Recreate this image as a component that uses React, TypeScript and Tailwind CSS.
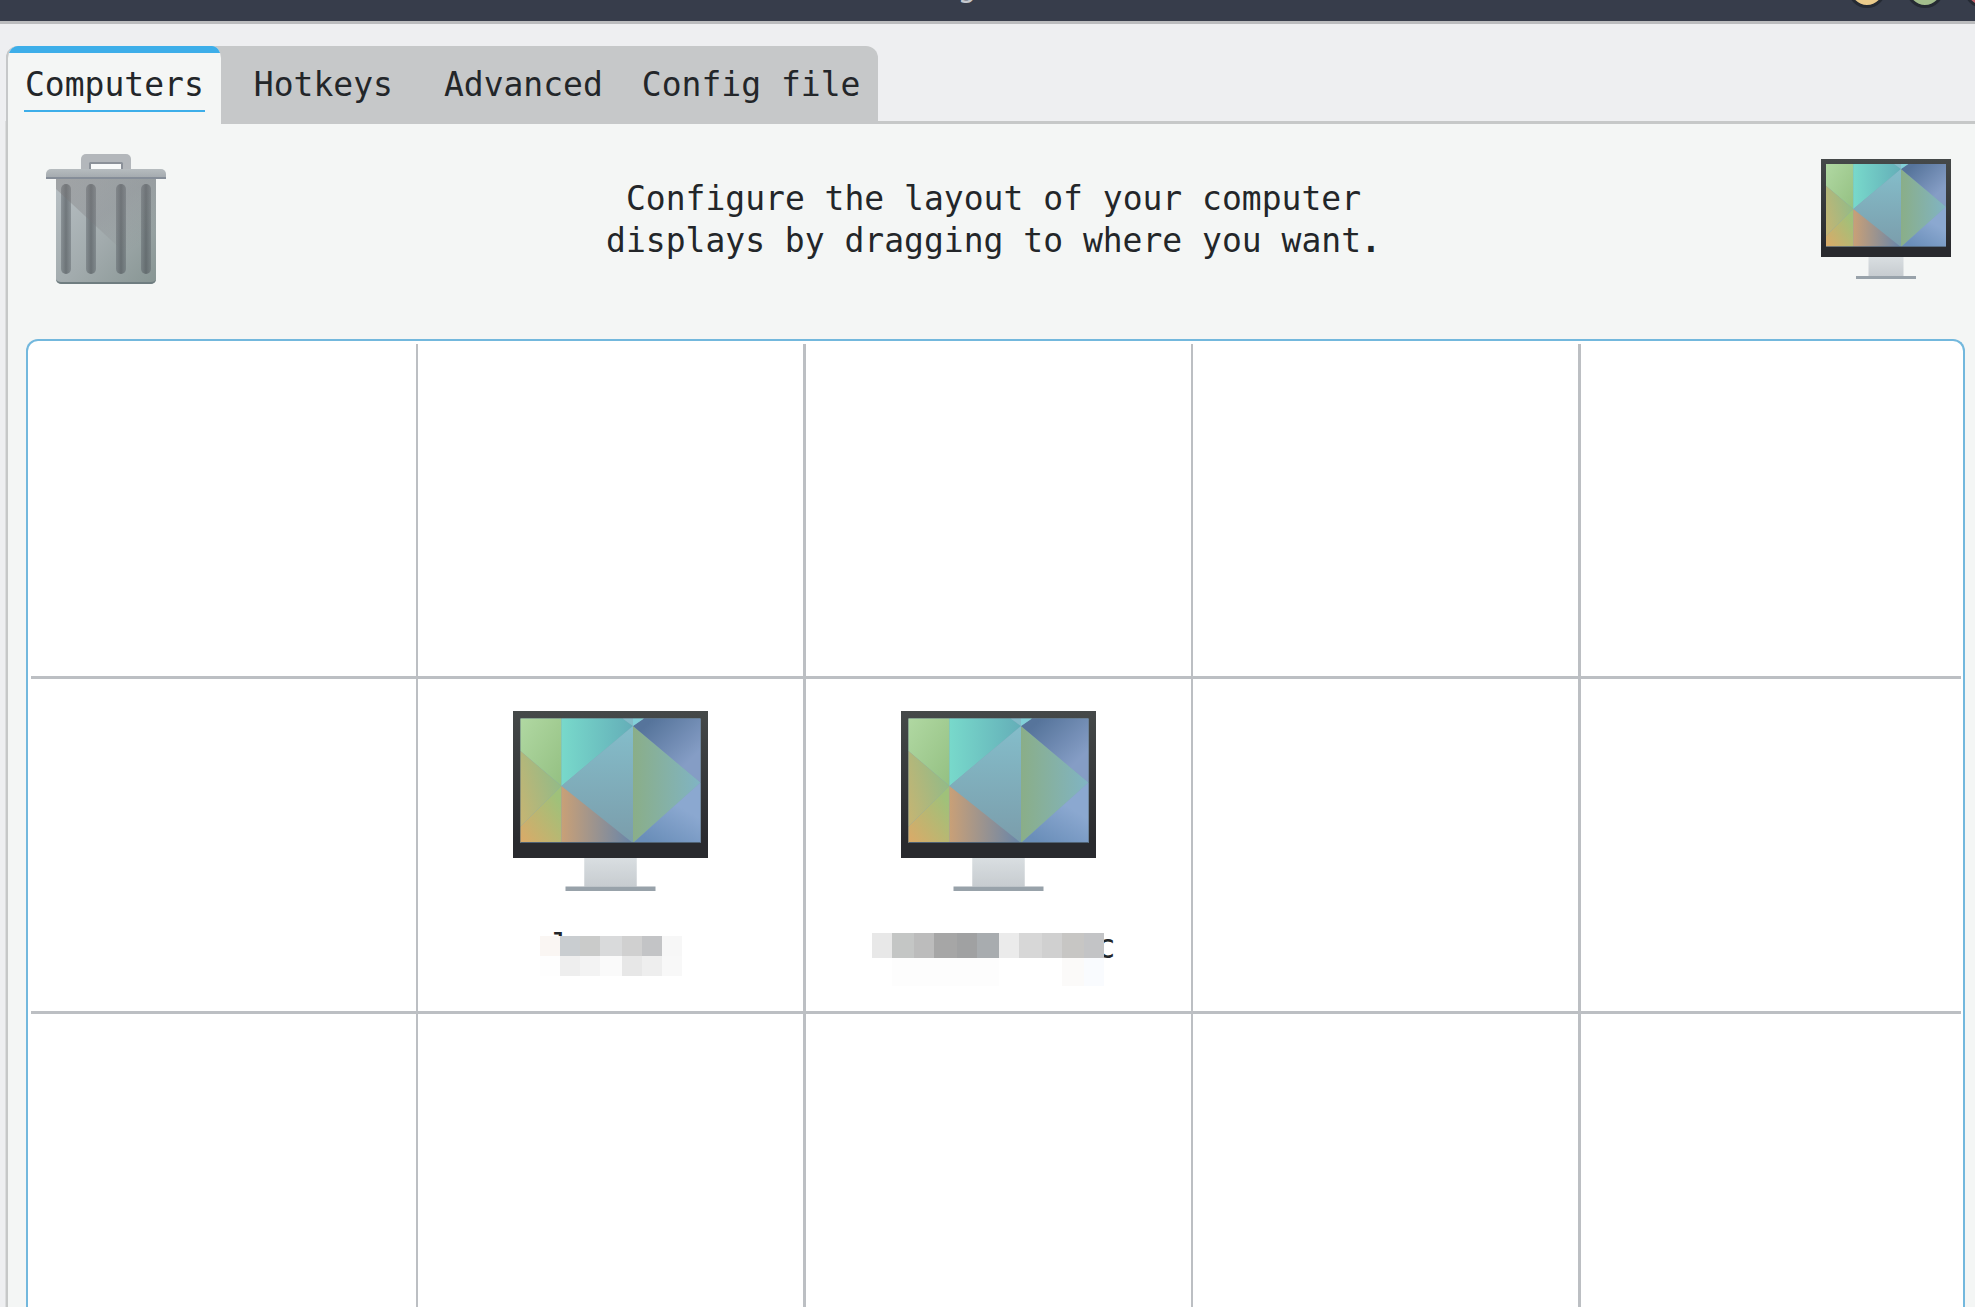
import { useId, useState } from "react";

function TrashIcon() {
  return (
    <svg viewBox="0 0 120 130" className="h-[130px] w-[120px]" aria-hidden="true">
      <defs>
        <linearGradient id="can" x1="0" y1="0.1" x2="1" y2="1">
          <stop offset="0" stopColor="#b6bec2" />
          <stop offset="0.5" stopColor="#a2abad" />
          <stop offset="1" stopColor="#879593" />
        </linearGradient>
        <linearGradient id="shade" x1="0" y1="0" x2="0.75" y2="1">
          <stop offset="0" stopColor="#77716f" stopOpacity="0.36" />
          <stop offset="0.45" stopColor="#77757a" stopOpacity="0.26" />
          <stop offset="0.8" stopColor="#777" stopOpacity="0" />
        </linearGradient>
        <linearGradient id="lid" x1="0" y1="0" x2="0" y2="1">
          <stop offset="0" stopColor="#b6bcbf" />
          <stop offset="1" stopColor="#a1a7ac" />
        </linearGradient>
        <linearGradient id="slot" x1="0" y1="0" x2="1" y2="0">
          <stop offset="0" stopColor="#5b6268" stopOpacity="0.45" />
          <stop offset="0.5" stopColor="#4d5358" stopOpacity="0.65" />
          <stop offset="1" stopColor="#5b6268" stopOpacity="0.45" />
        </linearGradient>
      </defs>
      <path d="M35 15V5a5 5 0 0 1 5-5h40a5 5 0 0 1 5 5v10z" fill="#b3b7bb" />
      <path d="M43 15V9.500q0-1.500 1.500-1.500h31q1.500 0 1.500 1.500V15z" fill="#8b9199" />
      <path d="M45 10h30v5H45z" fill="#f8fafa" />
      <path d="M10 25h100v100a5 5 0 0 1-5 5H15a5 5 0 0 1-5-5z" fill="url(#can)" />
      <path d="M10 125a5 5 0 0 0 5 5h90a5 5 0 0 0 5-5q-1 3-5 3H15q-4 0-5-3z" fill="#6f7d80" />
      {[15, 40, 70, 95].map((x) => (
        <rect key={x} x={x} y="30" width="10" height="90" rx="5" fill="url(#slot)" />
      ))}
      <path d="M10 25h100v103L10 35z" fill="url(#shade)" />
      <path d="M0 25v-5a5 5 0 0 1 5-5h110a5 5 0 0 1 5 5v5z" fill="url(#lid)" />
      <path d="M0 23h120v2H0z" fill="#858d98" />
    </svg>
  );
}

function MonitorIcon({ className }: { className: string }) {
  const id = useId();
  const ref = (name: string) => `url(#${id}${name})`;
  const gradients = [
    { name: "frame", from: "#454949", to: "#292a2e", v: [0, 0, 0, 0.9] },
    { name: "stand", from: "#d9dee1", to: "#c7ccd0", v: [0, 0, 0, 1] },
    { name: "leaf", from: "#b0d8a2", to: "#94c082", v: [0, 0, 1, 1] },
    { name: "moss", from: "#8fbb89", to: "#c3b574", v: [1, 0.3, 0, 0.8] },
    { name: "sand", from: "#9fc17a", to: "#d8ab69", v: [0.9, 0.2, 0.1, 1] },
    { name: "teal", from: "#78d9cb", to: "#64aeb8", v: [0, 0, 1, 0] },
    { name: "lake", from: "#84bdca", to: "#7b9dab", v: [0, 0, 0, 1] },
    { name: "clay", from: "#c9a077", to: "#6885a9", v: [0, 0, 1, 0] },
    { name: "sage", from: "#8aae88", to: "#80b4c4", v: [0, 0, 1, 0] },
    { name: "navy", from: "#56749b", to: "#859dc5", v: [0.2, 0.1, 0.8, 0.7] },
    { name: "sky", from: "#8ba8d0", to: "#6a8eb9", v: [0.7, 0.4, 0.3, 1] },
  ];
  return (
    <svg viewBox="0 0 130 120" className={className} aria-hidden="true">
      <defs>
        {gradients.map((g) => (
          <linearGradient key={g.name} id={id + g.name} x1={g.v[0]} y1={g.v[1]} x2={g.v[2]} y2={g.v[3]}>
            <stop offset="0" stopColor={g.from} />
            <stop offset="1" stopColor={g.to} />
          </linearGradient>
        ))}
      </defs>
      <path d="M47.500 98h35v19h-35z" fill={ref("stand")} />
      <path d="M35 117h60v3H35z" fill="#98a2aa" />
      <path d="M0 0h130v98H0z" fill={ref("frame")} />
      <path d="M5 5h120v83H5z" fill="#7fa3b4" />
      <path d="M5 5h27.300v45L5 26.700z" fill={ref("leaf")} />
      <path d="M5 26.700L32.300 50 5 77z" fill={ref("moss")} />
      <path d="M5 77l27.300-27v38H5z" fill={ref("sand")} />
      <path d="M32.300 5H73l7 5-47.700 40z" fill={ref("teal")} />
      <path d="M80 10v78L32.300 50z" fill={ref("lake")} />
      <path d="M32.300 50L80 88H32.300z" fill={ref("clay")} />
      <path d="M80 10l45 37.700L80 88z" fill={ref("sage")} />
      <path d="M87.300 5H125v42.700L80 10z" fill={ref("navy")} />
      <path d="M125 47.700V88H80z" fill={ref("sky")} />
      <path d="M73 5h7v5z" fill="#84bcc9" />
      <path d="M80 5h7.300L80 10z" fill="#82d0d8" />
      <path d="M5 87.300h120v0.700H5z" fill="#4f6274" />
    </svg>
  );
}

const tabs = [
  { name: "Computers", className: "px-4" },
  { name: "Hotkeys", className: "px-[30px]" },
  { name: "Advanced", className: "px-[21px]" },
  { name: "Config file", className: "px-[18px] rounded-tr-xl" },
];

function Tabs() {
  const [active, setActive] = useState("Computers");
  return (
    <div role="tablist" className="z-10 -mb-[3px] ml-[6px] flex h-[78px]">
      {tabs.map((tab) =>
        tab.name === active ? (
          <div key={tab.name} className="flex bg-[#c6c8c9] rounded-tl-xl">
            <button
              role="tab"
              aria-selected="true"
              className="flex flex-col items-center overflow-hidden rounded-t-xl border-r-3 border-l-2 border-[#c6c8c9] bg-[#f4f6f5]"
            >
              <span className="h-[7px] w-full bg-[#3daee9]" />
              <span className="mx-4 mt-[11px] border-b-2 border-[#3daee9] px-px pb-1">{tab.name}</span>
            </button>
          </div>
        ) : (
          <button
            key={tab.name}
            role="tab"
            aria-selected="false"
            onClick={() => setActive(tab.name)}
            className={"flex items-start bg-[#c6c8c9] pt-[18px] " + tab.className}
          >
            {tab.name}
          </button>
        ),
      )}
    </div>
  );
}

function ShortLabel() {
  return (
    <span className="relative mt-[35px] block w-[142px] pl-3 text-left">
      l
      <span className="absolute top-[10px] left-0 grid h-10 w-full grid-cols-[20fr_20fr_20fr_22fr_20fr_20fr_20fr] grid-rows-2">
        <span className="bg-[#faf6f3]" />
        <span className="bg-[#c9cdd0]" />
        <span className="bg-[#cacbca]" />
        <span className="bg-[#d9dadb]" />
        <span className="bg-[#d0d0d0]" />
        <span className="bg-[#c3c4c6]" />
        <span className="bg-[#f7f7f7]" />
        <span className="bg-[#fefefe]" />
        <span className="bg-[#eeeeee]" />
        <span className="bg-[#f3f3f3]" />
        <span className="bg-[#fafafa]" />
        <span className="bg-[#e7e7e7]" />
        <span className="bg-[#eeeeee]" />
        <span className="bg-[#f8f8f8]" />
      </span>
    </span>
  );
}

function LongLabel() {
  return (
    <span className="relative mt-[35px] block w-[234px] text-right">
      c
      <span className="absolute top-[7px] -left-[10px] grid w-[232px] grid-cols-[20fr_22fr_20fr_23fr_20fr_22fr_20fr_23fr_20fr_22fr_20fr] grid-rows-[25px_28px]">
        <span className="bg-[#e8e8e8]" />
        <span className="bg-[#c4c6c5]" />
        <span className="bg-[#bcbcbc]" />
        <span className="bg-[#a6a6a6]" />
        <span className="bg-[#a0a1a2]" />
        <span className="bg-[#a8acaf]" />
        <span className="bg-[#ebebeb]" />
        <span className="bg-[#d7d7d7]" />
        <span className="bg-[#d0d0d0]" />
        <span className="bg-[#c7c6c4]" />
        <span className="bg-[#c3c4c6]" />
        <span className="col-span-5 col-start-2 bg-[#fdfdfd]" />
        <span className="col-start-10 bg-[#fbfaf9]" />
        <span className="bg-[#f9fbfe]" />
      </span>
    </span>
  );
}

const rowBorders = ["border-b-3", "border-b-3", ""];
const columnBorders = ["border-r-2", "border-r-3", "border-r-2", "border-r-3", ""];

function ScreenGrid() {
  return (
    <div className="mr-[10px] ml-[18px] flex flex-1 rounded-t-xl border-2 border-b-0 border-[#73b8dd] bg-white pt-[3px] pr-[2px] pl-[3px]">
      <div className="grid flex-1 grid-cols-[387fr_388fr_387fr_388fr_380fr] grid-rows-[335px_335px_1fr]">
        {rowBorders.map((rowBorder, row) =>
          columnBorders.map((columnBorder, column) => (
            <div key={`${row}-${column}`} className={`flex justify-center border-[#bcbfc3] ${rowBorder} ${columnBorder}`}>
              {row === 1 && (column === 1 || column === 2) && (
                <button className="flex flex-col items-center self-start pt-8" aria-label={`Screen ${column}`}>
                  <MonitorIcon className="h-[180px] w-[195px]" />
                  {column === 1 ? <ShortLabel /> : <LongLabel />}
                </button>
              )}
            </div>
          )),
        )}
      </div>
    </div>
  );
}

function TitleBar() {
  return (
    <header className="flex h-6 shrink-0 items-end overflow-hidden border-b-3 border-[#bbbcbe] bg-[#373d4b]">
      <h1 className="flex-1 pb-[15px] pl-[86px] text-center text-[#c5c8ce]">g</h1>
      <div className="-mr-[27px] flex shrink-0 gap-5 pb-[13px]">
        <button aria-label="Minimize" className="size-[38px] rounded-full border-3 border-[#252a33] bg-[#ebcb8b]" />
        <button aria-label="Maximize" className="size-[38px] rounded-full border-3 border-[#252a33] bg-[#a3be8c]" />
        <button aria-label="Close" className="size-[38px] rounded-full border-3 border-[#252a33] bg-[#bf616a]" />
      </div>
    </header>
  );
}

export default function App() {
  return (
    <div className="flex min-h-screen flex-col overflow-hidden bg-[#eeeff1] font-['DejaVu_Sans_Mono',monospace] text-[33px] leading-[42px] text-[#232629]">
      <TitleBar />
      <div className="flex flex-1 flex-col pt-[22px]">
        <Tabs />
        <main className="ml-[6px] flex flex-1 flex-col border-t-3 border-l-2 border-[#c6c8c8] bg-[#f4f6f5] shadow-[-1px_0_0_#dcddde]">
          <div className="flex h-[215px] items-start pt-[30px] pr-6 pl-[38px]">
            <button aria-label="Remove screen">
              <TrashIcon />
            </button>
            <p className="flex-1 pt-6 text-center">
              Configure the layout of your computer
              <br />
              displays by dragging to where you want<b>.</b>
            </p>
            <button aria-label="Add screen" className="pt-[5px]">
              <MonitorIcon className="h-[120px] w-[130px]" />
            </button>
          </div>
          <ScreenGrid />
        </main>
      </div>
    </div>
  );
}
